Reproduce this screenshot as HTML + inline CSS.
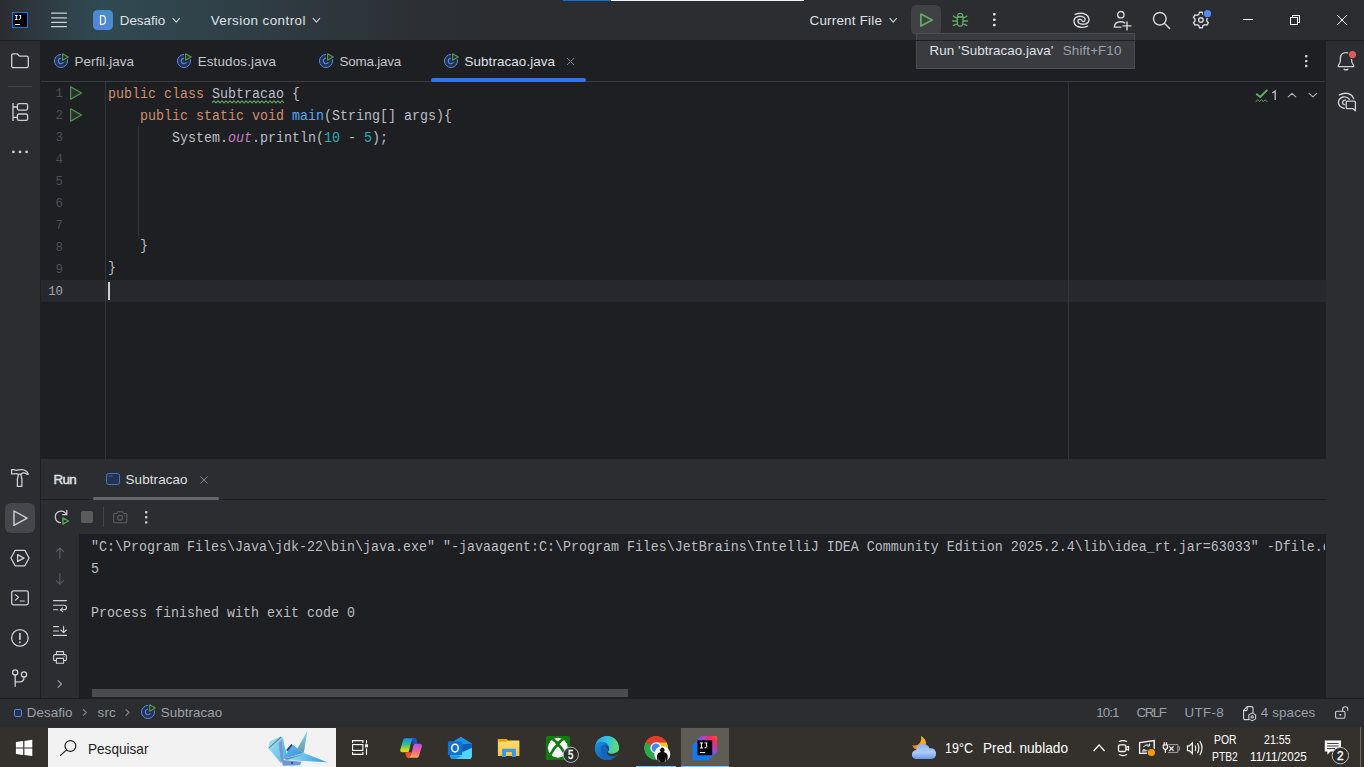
<!DOCTYPE html>
<html>
<head>
<meta charset="utf-8">
<title>Desafio - Subtracao.java</title>
<style>
*{box-sizing:border-box;margin:0;padding:0}
html,body{width:1364px;height:767px;overflow:hidden;background:#1e1f22}
body{position:relative;font-family:"Liberation Sans",sans-serif;font-size:13px;color:#dfe1e5}
.a{position:absolute}
.t{position:absolute;white-space:pre;line-height:16px}
svg{position:absolute;overflow:visible}
.mono{font-family:"Liberation Mono",monospace;font-size:13.333px;letter-spacing:0}
#title{left:0;top:0;width:1364px;height:40px;background:linear-gradient(90deg,#2b2d30 0px,#2d363c 30px,#2f434b 70px,#2f4a53 100px,#30474f 140px,#30424a 200px,#2e393f 300px,#2c3136 400px,#2b2d30 500px)}
#left{left:0;top:40px;width:40px;height:658px;background:#2b2d30}
#leftb{left:40px;top:40px;width:1px;height:658px;background:#1e1f22}
#right{left:1326px;top:40px;width:38px;height:658px;background:#2b2d30}
#tabs{left:41px;top:40px;width:1285px;height:41px;background:#1e1f22}
#tabline{left:41px;top:81px;width:1284px;height:1px;background:#393b40}
#editor{left:41px;top:82px;width:1285px;height:377px;background:#1e1f22}
#run{left:41px;top:459px;width:1285px;height:239px;background:#2b2d30}
#console{left:79px;top:534px;width:1247px;height:164px;background:#1e1f22}
#status{left:0;top:698px;width:1364px;height:29px;background:#2b2d30}
#taskbar{left:0;top:727px;width:1364px;height:40px;background:#34312c}
.kw{color:#cf8e6d}.fn{color:#56a8f5}.num{color:#2aacb8}.fld{color:#c77dbb;font-style:italic}
.code{color:#bcbec4}
.lnum{font-family:"Liberation Mono",monospace;font-size:12.4px;left:35px;width:28px;text-align:right;transform:translateY(-1.3px)}
.cl{transform:scaleY(1.09);transform-origin:0 11.55px}
</style>
</head>
<body>
<div id="title" class="a"></div>
<div id="left" class="a"></div>
<div id="leftb" class="a"></div>
<div id="right" class="a"></div>
<div id="tabs" class="a"></div>
<div id="tabline" class="a"></div>
<div id="editor" class="a"></div>
<div id="run" class="a"></div>
<div id="console" class="a"></div>
<div id="status" class="a"></div>
<div id="taskbar" class="a"></div>
<div class="a" style="left:563px;top:0;width:48px;height:1px;background:#0a6fd6"></div>
<div class="a" style="left:611px;top:0;width:193px;height:1px;background:#f2f2f2"></div>
<svg style="left:12px;top:12px" width="16" height="16" viewBox="0 0 16 16">
<rect x="0.5" y="0.5" width="15" height="15" fill="#000" stroke="#087cfa" stroke-width="1"/>
<path d="M3 3.5 h2.6 M4.3 3.5 v4 M3 7.5 h2.6 M7.3 3.5 h1.9 M8.6 3.5 v2.8 q0 1.3 -1.9 1.1" stroke="#fff" stroke-width="1" fill="none"/>
<rect x="3" y="12" width="5" height="1" fill="#fff"/>
</svg>
<svg style="left:51px;top:12px" width="16" height="16" viewBox="0 0 16 16"><rect x="0" y="0.6" width="16" height="1.2" rx="0.6" fill="#ced0d6"/><rect x="0" y="5.2" width="16" height="1.2" rx="0.6" fill="#ced0d6"/><rect x="0" y="9.7" width="16" height="1.2" rx="0.6" fill="#ced0d6"/><rect x="0" y="14.1" width="16" height="1.2" rx="0.6" fill="#ced0d6"/></svg>
<svg style="left:93px;top:10px" width="20" height="20" viewBox="0 0 20 20">
<defs><linearGradient id="dg" x1="0" y1="1" x2="1" y2="0"><stop offset="0" stop-color="#5b80e6"/><stop offset="1" stop-color="#3f93c4"/></linearGradient></defs>
<rect width="20" height="20" rx="4.5" fill="url(#dg)"/>
<path d="M7.5 5.7 h1.9 q3.1 0 3.1 4.3 q0 4.3 -3.1 4.3 h-1.9 z" fill="none" stroke="#fff" stroke-width="1.25" stroke-linejoin="round"/>
</svg>
<div class="t" style="left:119.70px;top:13.36px;font-size:13.4px;letter-spacing:0.027px;color:#dfe1e5;">Desafio</div>
<svg style="left:0;top:0" width="10" height="10"><path d="M172.89999999999998 18.3 L176.2 22.099999999999998 L179.5 18.3" fill="none" stroke="#ced0d6" stroke-width="1.1" stroke-linecap="round" stroke-linejoin="round"/></svg>
<div class="t" style="left:210.70px;top:13.36px;font-size:13.4px;letter-spacing:0.440px;color:#dfe1e5;">Version control</div>
<svg style="left:0;top:0" width="10" height="10"><path d="M313.09999999999997 18.3 L316.4 22.099999999999998 L319.7 18.3" fill="none" stroke="#ced0d6" stroke-width="1.1" stroke-linecap="round" stroke-linejoin="round"/></svg>
<div class="t" style="left:809.50px;top:13.36px;font-size:13.4px;letter-spacing:0.227px;color:#dfe1e5;">Current File</div>
<svg style="left:0;top:0" width="10" height="10"><path d="M889.9000000000001 18.3 L893.2 22.099999999999998 L896.5 18.3" fill="none" stroke="#ced0d6" stroke-width="1.1" stroke-linecap="round" stroke-linejoin="round"/></svg>
<div class="a" style="left:911px;top:5px;width:30px;height:30px;border-radius:5.5px;background:#3f4145"></div>
<svg style="left:0;top:0" width="10" height="10"><path d="M920.9 14 L932.2 20.05 L920.9 26.1 Z" fill="none" stroke="#5fad65" stroke-width="1.7" stroke-linejoin="round"/></svg>
<svg style="left:0;top:0" width="10" height="10" fill="none" stroke="#5fad65" stroke-width="1.45" stroke-linecap="round" stroke-linejoin="round">
<path d="M957.5 16.9 Q957.4 13.3 960.15 13.3 Q962.9 13.3 962.8 16.9 Z" stroke-width="1.25"/>
<path d="M957.3 16.9 H963 V22.4 Q963 26.2 960.15 26.2 Q957.3 26.2 957.3 22.4 Z" stroke-width="1.25"/>
<path d="M957 17.7 Q954.6 17.5 953.5 16.1 M957 21 H952.8 M957.1 24.1 Q954.8 24.3 953.5 25.6 M963.3 17.7 Q965.7 17.5 966.8 16.1 M963.3 21 H967.5 M963.2 24.1 Q965.5 24.3 966.8 25.6"/>
</svg>
<svg style="left:992.6px;top:13.3px" width="3" height="14" viewBox="0 0 3 14"><rect x="0" y="0" width="2.6" height="2.6" rx="0.8" fill="#dfe1e5"/><rect x="0" y="5.4" width="2.6" height="2.6" rx="0.8" fill="#dfe1e5"/><rect x="0" y="10.7" width="2.6" height="2.6" rx="0.8" fill="#dfe1e5"/></svg>
<svg style="left:0;top:0" width="10" height="10" fill="none" stroke="#d4d6db" stroke-width="1.5" stroke-linecap="round" transform="translate(1081.3 20) scale(0.94) translate(-1081.3 -20)">
<path d="M1074.3 13.7 Q1081 11.3 1086 13.9 Q1089.4 16.2 1089.1 20.2 Q1088.4 23.5 1084.4 24.1 Q1080 24.5 1078 22.6 Q1076.5 20.4 1078.5 19 Q1080.5 18.3 1081.7 20.2"/>
<path d="M1087.6 26.1 Q1082 28.6 1077 26.6 Q1073 24.4 1073.2 20.4 Q1073.6 16.8 1077.6 15.9 Q1082 15.2 1084.4 17.2 Q1086 19 1084.6 20.8 Q1083.4 21.8 1082.2 21"/>
</svg>
<svg style="left:1113px;top:10px" width="20" height="20" viewBox="0 0 20 20" fill="none" stroke="#d4d6db" stroke-width="1.4" stroke-linecap="round">
<circle cx="7.8" cy="4.7" r="3.2"/>
<path d="M8 17.1 H1.4 C1.4 13.6 4 11.8 7.6 11.8 C9.3 11.8 10.6 12.2 11.7 12.9"/>
<path d="M14 11.9 v8 M10 15.9 h8"/>
</svg>
<svg style="left:1152px;top:11px" width="20" height="20" viewBox="0 0 20 20" fill="none" stroke="#d4d6db" stroke-width="1.45" stroke-linecap="round">
<circle cx="7.8" cy="7.7" r="6.3"/><path d="M12.4 12.3 L17.6 17.5"/>
</svg>
<svg style="left:0;top:0" width="10" height="10" fill="none" stroke="#d4d6db" stroke-width="1.4" stroke-linejoin="round">
<path d="M1199.50 12.22 L1202.30 12.22 L1202.93 14.35 L1204.77 15.42 L1206.93 14.90 L1208.33 17.32 L1206.81 18.94 L1206.81 21.06 L1208.33 22.68 L1206.93 25.10 L1204.77 24.58 L1202.93 25.65 L1202.30 27.78 L1199.50 27.78 L1198.87 25.65 L1197.03 24.58 L1194.87 25.10 L1193.47 22.68 L1194.99 21.06 L1194.99 18.94 L1193.47 17.32 L1194.87 14.90 L1197.03 15.42 L1198.87 14.35 Z"/><circle cx="1200.9" cy="20" r="2.3"/>
<circle cx="1207.5" cy="13.7" r="4.6" fill="#2b2d30" stroke="none"/><circle cx="1207.5" cy="13.7" r="3.6" fill="#548af7" stroke="none"/>
</svg>
<svg style="left:0;top:0" width="10" height="10" fill="none" stroke="#fff" stroke-width="1" shape-rendering="crispEdges">
<path d="M1243 19.5 H1253"/>
<rect x="1290.5" y="17.5" width="7" height="7"/><path d="M1292.5 17.5 V15.5 H1299.5 V22.5 H1297.5"/>
</svg>
<svg style="left:0;top:0" width="10" height="10" fill="none" stroke="#fff" stroke-width="1"><path d="M1337 15 L1347 25 M1347 15 L1337 25"/></svg>
<div class="a" style="left:916px;top:33px;width:219px;height:36px;background:#393b40;border:1px solid #4a4c52"></div>
<div class="t" style="left:929.60px;top:43.26px;font-size:13.4px;letter-spacing:0.052px;color:#dfe1e5;">Run 'Subtracao.java'</div>
<div class="t" style="left:1062.80px;top:43.26px;font-size:13.4px;letter-spacing:0.109px;color:#9da0a8;">Shift+F10</div>
<svg style="left:53px;top:53px" width="16" height="16" viewBox="0 0 16 16"><circle cx="8" cy="8" r="6.5" fill="#25324d" stroke="#548af7" stroke-width="1"/><path d="M10.1 6.3 A2.7 2.7 0 1 0 10.1 9.7" fill="none" stroke="#548af7" stroke-width="1.1" stroke-linecap="round"/><path d="M9.6 0.7 L15.3 4 L9.6 7.3 Z" fill="#1e1f22" stroke="#1e1f22" stroke-width="3" stroke-linejoin="round"/><path d="M9.6 0.7 L15.3 4 L9.6 7.3 Z" fill="#253627" stroke="#57965c" stroke-width="1.1" stroke-linejoin="round"/></svg>
<div class="t" style="left:74.50px;top:54.36px;font-size:13.4px;letter-spacing:0.066px;color:#c4c6cc;">Perfil.java</div>
<svg style="left:176px;top:53px" width="16" height="16" viewBox="0 0 16 16"><circle cx="8" cy="8" r="6.5" fill="#25324d" stroke="#548af7" stroke-width="1"/><path d="M10.1 6.3 A2.7 2.7 0 1 0 10.1 9.7" fill="none" stroke="#548af7" stroke-width="1.1" stroke-linecap="round"/><path d="M9.6 0.7 L15.3 4 L9.6 7.3 Z" fill="#1e1f22" stroke="#1e1f22" stroke-width="3" stroke-linejoin="round"/><path d="M9.6 0.7 L15.3 4 L9.6 7.3 Z" fill="#253627" stroke="#57965c" stroke-width="1.1" stroke-linejoin="round"/></svg>
<div class="t" style="left:197.70px;top:54.36px;font-size:13.4px;letter-spacing:0.152px;color:#c4c6cc;">Estudos.java</div>
<svg style="left:318px;top:53px" width="16" height="16" viewBox="0 0 16 16"><circle cx="8" cy="8" r="6.5" fill="#25324d" stroke="#548af7" stroke-width="1"/><path d="M10.1 6.3 A2.7 2.7 0 1 0 10.1 9.7" fill="none" stroke="#548af7" stroke-width="1.1" stroke-linecap="round"/><path d="M9.6 0.7 L15.3 4 L9.6 7.3 Z" fill="#1e1f22" stroke="#1e1f22" stroke-width="3" stroke-linejoin="round"/><path d="M9.6 0.7 L15.3 4 L9.6 7.3 Z" fill="#253627" stroke="#57965c" stroke-width="1.1" stroke-linejoin="round"/></svg>
<div class="t" style="left:339.60px;top:54.36px;font-size:13.4px;letter-spacing:-0.214px;color:#c4c6cc;">Soma.java</div>
<svg style="left:443.4px;top:53px" width="16" height="16" viewBox="0 0 16 16"><circle cx="8" cy="8" r="6.5" fill="#25324d" stroke="#548af7" stroke-width="1"/><path d="M10.1 6.3 A2.7 2.7 0 1 0 10.1 9.7" fill="none" stroke="#548af7" stroke-width="1.1" stroke-linecap="round"/><path d="M9.6 0.7 L15.3 4 L9.6 7.3 Z" fill="#1e1f22" stroke="#1e1f22" stroke-width="3" stroke-linejoin="round"/><path d="M9.6 0.7 L15.3 4 L9.6 7.3 Z" fill="#253627" stroke="#57965c" stroke-width="1.1" stroke-linejoin="round"/></svg>
<div class="t" style="left:464.50px;top:54.36px;font-size:13.4px;letter-spacing:0.093px;color:#dfe1e5;">Subtracao.java</div>
<div class="a" style="left:431px;top:78px;width:155px;height:3.5px;border-radius:2px;background:#3574f0"></div>
<svg style="left:566px;top:57px" width="9" height="9" viewBox="0 0 9 9"><path d="M1 1 L8 8 M8 1 L1 8" stroke="#868a91" stroke-width="1" fill="none"/></svg>
<svg style="left:1304.8px;top:54.8px" width="3" height="14" viewBox="0 0 3 14"><rect x="0" y="0" width="2.4" height="2.4" rx="0.6" fill="#ced0d6"/><rect x="0" y="4.9" width="2.4" height="2.4" rx="0.6" fill="#ced0d6"/><rect x="0" y="9.8" width="2.4" height="2.4" rx="0.6" fill="#ced0d6"/></svg>
<div class="a" style="left:41px;top:280px;width:1285px;height:22px;background:#26282e"></div>
<div class="a" style="left:105px;top:82px;width:1px;height:377px;background:#313438"></div>
<div class="a" style="left:1068px;top:82px;width:1px;height:377px;background:#313438"></div>
<div class="a" style="left:138px;top:126px;width:1px;height:110px;background:#313438"></div>
<div class="a" style="left:108px;top:282px;width:2px;height:18px;background:#ced0d6"></div>
<div class="t lnum" style="top:86.5px;color:#4b5059">1</div>
<div class="t lnum" style="top:108.5px;color:#4b5059">2</div>
<div class="t lnum" style="top:130.5px;color:#4b5059">3</div>
<div class="t lnum" style="top:152.5px;color:#4b5059">4</div>
<div class="t lnum" style="top:174.5px;color:#4b5059">5</div>
<div class="t lnum" style="top:196.5px;color:#4b5059">6</div>
<div class="t lnum" style="top:218.5px;color:#4b5059">7</div>
<div class="t lnum" style="top:240.5px;color:#4b5059">8</div>
<div class="t lnum" style="top:262.5px;color:#4b5059">9</div>
<div class="t lnum" style="top:284.5px;color:#a1a3ab">10</div>
<div class="t mono code cl" style="left:108px;top:86.5px"><span class="kw">public class</span> Subtracao {</div>
<div class="t mono code cl" style="left:108px;top:108.5px">    <span class="kw">public static void</span> <span class="fn">main</span>(String[] args){</div>
<div class="t mono code cl" style="left:108px;top:130.5px">        System.<span class="fld">out</span>.println(<span class="num">10</span> - <span class="num">5</span>);</div>
<div class="t mono code cl" style="left:108px;top:239.3px">    }</div>
<div class="t mono code cl" style="left:108px;top:261.3px">}</div>
<svg style="left:0;top:0" width="1364" height="200"><polyline points="212,102.9 214,100.9 216,102.9 218,100.9 220,102.9 222,100.9 224,102.9 226,100.9 228,102.9 230,100.9 232,102.9 234,100.9 236,102.9 238,100.9 240,102.9 242,100.9 244,102.9 246,100.9 248,102.9 250,100.9 252,102.9 254,100.9 256,102.9 258,100.9 260,102.9 262,100.9 264,102.9 266,100.9 268,102.9 270,100.9 272,102.9 274,100.9 276,102.9 278,100.9 280,102.9 282,100.9 284,102.9" fill="none" stroke="#5fa364" stroke-width="1.1"/></svg>
<svg style="left:68px;top:85px" width="16" height="16" viewBox="0 0 16 16"><path d="M2.6 1.7 L13.6 8 L2.6 14.3 Z" fill="#253627" stroke="#57965c" stroke-width="1.1" stroke-linejoin="round"/></svg>
<svg style="left:68px;top:107px" width="16" height="16" viewBox="0 0 16 16"><path d="M2.6 1.7 L13.6 8 L2.6 14.3 Z" fill="#253627" stroke="#57965c" stroke-width="1.1" stroke-linejoin="round"/></svg>
<div class="a" style="left:41px;top:499px;width:1285px;height:1px;background:#1e1f22"></div>
<div class="t" style="left:53.40px;top:472.16px;font-size:13.4px;letter-spacing:-0.591px;color:#dfe1e5;-webkit-text-stroke:0.45px #dfe1e5;">Run</div>
<svg style="left:106px;top:473px" width="14" height="12" viewBox="0 0 14 12">
<rect x="0.5" y="0.5" width="13" height="11" rx="2" fill="#25324d" stroke="#4a7be0" stroke-width="0.9"/>
<path d="M2.6 3.2 h1.6 M5 3.2 h1.6" stroke="#4a7be0" stroke-width="0.9"/>
</svg>
<div class="t" style="left:125.50px;top:472.16px;font-size:13.4px;letter-spacing:0.127px;color:#dfe1e5;">Subtracao</div>
<svg style="left:200px;top:476px" width="8" height="8" viewBox="0 0 8 8"><path d="M0.4 0.4 L7.6 7.6 M7.6 0.4 L0.4 7.6" stroke="#868a91" stroke-width="1" fill="none"/></svg>
<div class="a" style="left:93px;top:497px;width:126px;height:3px;border-radius:1.5px;background:#63666c"></div>
<svg style="left:0;top:0" width="10" height="10" fill="none">
<path d="M66.3 514.6 A5.7 5.7 0 1 0 60.9 522.6" stroke="#ced0d6" stroke-width="1.25" stroke-linecap="round"/>
<path d="M62.7 514.7 H66.8 V510.3" stroke="#ced0d6" stroke-width="1.25" stroke-linecap="round" stroke-linejoin="miter"/>
<path d="M62.9 518 L68.5 521 L62.9 524 Z" fill="#2b2d30" stroke="#2b2d30" stroke-width="3.2" stroke-linejoin="round"/>
<path d="M62.9 517.9 L68.5 521 L62.9 524.1 Z" fill="#253627" stroke="#5aa15f" stroke-width="1.4" stroke-linejoin="round"/>
</svg>
<div class="a" style="left:81px;top:511px;width:12px;height:12px;border-radius:2px;background:#5b5b5e"></div>
<div class="a" style="left:103px;top:507px;width:1px;height:20px;background:#43454a"></div>
<svg style="left:113px;top:511px" width="14.5" height="12.5" viewBox="0 0 15 13" fill="none" stroke="#5e5f61" stroke-width="1.1" stroke-linejoin="round">
<path d="M0.6 4 Q0.6 2.6 2 2.6 H3.8 L5 0.7 H10 L11.2 2.6 H13 Q14.4 2.6 14.4 4 V10.8 Q14.4 12.2 13 12.2 H2 Q0.6 12.2 0.6 10.8 Z"/>
<circle cx="7.3" cy="7" r="2.5"/><circle cx="11.9" cy="4.8" r="0.55" fill="#5e5f61" stroke="none"/>
</svg>
<svg style="left:144.8px;top:510.8px" width="3" height="14" viewBox="0 0 3 14"><rect x="0" y="0" width="2.4" height="2.4" rx="0.7" fill="#ced0d6"/><rect x="0" y="5.1" width="2.4" height="2.4" rx="0.7" fill="#ced0d6"/><rect x="0" y="10.2" width="2.4" height="2.4" rx="0.7" fill="#ced0d6"/></svg>
<svg style="left:0;top:0" width="10" height="10"><path d="M59.9 558.2 V548.0 M56.3 551.6 L59.9 548.0 L63.5 551.6" fill="none" stroke="#5a5d63" stroke-width="1.1" stroke-linecap="round" stroke-linejoin="round"/></svg>
<svg style="left:0;top:0" width="10" height="10"><path d="M59.9 573.6 V584.1999999999999 M56.3 580.5999999999999 L59.9 584.1999999999999 L63.5 580.5999999999999" fill="none" stroke="#5a5d63" stroke-width="1.1" stroke-linecap="round" stroke-linejoin="round"/></svg>
<svg style="left:53px;top:600px" width="14" height="12" viewBox="0 0 14 12" fill="none" stroke="#ced0d6" stroke-width="1.1" stroke-linecap="round" stroke-linejoin="round">
<path d="M0.5 0.6 H13.5"/><path d="M0.5 5.2 H11 Q13.5 5.2 13.5 7.5 Q13.5 9.8 11 9.8 H7.6"/><path d="M9.6 7.8 L7.5 9.8 L9.6 11.7"/><path d="M0.5 9.8 H4.8"/>
</svg>
<svg style="left:53px;top:626px" width="14" height="10" viewBox="0 0 14 10" fill="none" stroke="#ced0d6" stroke-width="1.1" stroke-linecap="round" stroke-linejoin="round">
<path d="M0.5 0.6 H5.6 M0.5 5 H5.6 M0.5 9.4 H13.5"/><path d="M10.6 0.4 V6.6 M7.9 4 L10.6 6.7 L13.3 4"/>
</svg>
<svg style="left:53px;top:651px" width="14" height="13" viewBox="0 0 14 13" fill="none" stroke="#ced0d6" stroke-width="1.1" stroke-linejoin="round">
<path d="M3.4 3.6 V0.6 H10.6 V3.6"/><path d="M3.4 9.6 H2 Q0.6 9.6 0.6 8.2 V5 Q0.6 3.6 2 3.6 H12 Q13.4 3.6 13.4 5 V8.2 Q13.4 9.6 12 9.6 H10.6"/><rect x="3.4" y="7.4" width="7.2" height="4.8"/><circle cx="11.2" cy="5.6" r="0.5" fill="#ced0d6" stroke="none"/>
</svg>
<svg style="left:0;top:0" width="10" height="10"><path d="M58 680.6 L61.5 684 L58 687.4" fill="none" stroke="#9da0a8" stroke-width="1.1" stroke-linecap="round" stroke-linejoin="round"/></svg>
<div class="a" style="left:79px;top:534px;width:1246px;height:160px;overflow:hidden">
<div class="t mono cl" style="left:12px;top:5.5px;color:#bcbec4">"C:\Program Files\Java\jdk-22\bin\java.exe" "-javaagent:C:\Program Files\JetBrains\IntelliJ IDEA Community Edition 2025.2.4\lib\idea_rt.jar=63033" -Dfile.encoding=UTF-8 -Dsun.stdout.encoding=UTF-8</div>
<div class="t mono cl" style="left:12px;top:27.5px;color:#bcbec4">5</div>
<div class="t mono cl" style="left:12px;top:71.5px;color:#bcbec4">Process finished with exit code 0</div>
</div>
<div class="a" style="left:92px;top:689px;width:536px;height:8px;background:#4a4b4f"></div>
<svg style="left:13.9px;top:709px" width="8" height="8" viewBox="0 0 8 8"><rect x="0.5" y="0.5" width="7" height="7" rx="1.3" fill="#25324d" stroke="#548af7" stroke-width="1"/></svg>
<div class="t" style="left:26.80px;top:705.06px;font-size:13.4px;letter-spacing:0.027px;color:#9da0a8;">Desafio</div>
<svg style="left:0;top:0" width="10" height="10"><path d="M83.3 709.6 L86.3 712.5 L83.3 715.4" fill="none" stroke="#868a91" stroke-width="1.1" stroke-linecap="round" stroke-linejoin="round"/></svg>
<div class="t" style="left:97.50px;top:705.06px;font-size:13.4px;letter-spacing:0.219px;color:#9da0a8;">src</div>
<svg style="left:0;top:0" width="10" height="10"><path d="M126.0 709.6 L129.0 712.5 L126.0 715.4" fill="none" stroke="#868a91" stroke-width="1.1" stroke-linecap="round" stroke-linejoin="round"/></svg>
<svg style="left:140.2px;top:704.1px" width="16" height="16" viewBox="0 0 16 16"><circle cx="8" cy="8" r="6.5" fill="#25324d" stroke="#548af7" stroke-width="1"/><path d="M10.1 6.3 A2.7 2.7 0 1 0 10.1 9.7" fill="none" stroke="#548af7" stroke-width="1.1" stroke-linecap="round"/><path d="M9.6 0.7 L15.3 4 L9.6 7.3 Z" fill="#2b2d30" stroke="#2b2d30" stroke-width="3" stroke-linejoin="round"/><path d="M9.6 0.7 L15.3 4 L9.6 7.3 Z" fill="#253627" stroke="#57965c" stroke-width="1.1" stroke-linejoin="round"/></svg>
<div class="t" style="left:160.70px;top:705.06px;font-size:13.4px;letter-spacing:0.064px;color:#9da0a8;">Subtracao</div>
<div class="t" style="left:1096.20px;top:705.16px;font-size:13.4px;letter-spacing:-0.894px;color:#9da0a8;">10:1</div>
<div class="t" style="left:1136.60px;top:705.16px;font-size:13.4px;letter-spacing:-1.531px;color:#9da0a8;">CRLF</div>
<div class="t" style="left:1184.50px;top:705.16px;font-size:13.4px;letter-spacing:0.309px;color:#9da0a8;">UTF-8</div>
<div class="t" style="left:1260.70px;top:705.16px;font-size:13.4px;letter-spacing:0.138px;color:#9da0a8;">4 spaces</div>
<svg style="left:1243px;top:706px" width="14" height="16" viewBox="0 0 14 16" fill="none" stroke="#ced0d6" stroke-width="1.1" stroke-linejoin="round" stroke-linecap="round">
<path d="M5.6 13.6 H2 Q0.6 13.6 0.6 12.2 V4.4 L4.2 0.6 H8.6 Q10 0.6 10 2 V6.8"/><path d="M0.8 4.6 H3 Q4.2 4.6 4.2 3.4 V0.8"/>
<path d="M9.2 6.9 L12.6 8.9 V12.9 L9.2 14.9 L5.8 12.9 V8.9 Z" fill="#2b2d30"/><circle cx="9.2" cy="10.9" r="1.1"/>
</svg>
<svg style="left:1335px;top:705.9px" width="14" height="13" viewBox="0 0 14 13" fill="none" stroke="#ced0d6" stroke-width="1.1" stroke-linejoin="round" stroke-linecap="round">
<rect x="0.6" y="5.2" width="9.4" height="7" rx="1.4"/><rect x="4.4" y="8" width="1.8" height="1.6" fill="#ced0d6" stroke="none"/>
<path d="M7.6 5 V3.2 Q7.6 0.7 10.2 0.7 Q12.8 0.7 12.8 3.2 V4.2"/>
</svg>
<div class="a" style="left:48px;top:728px;width:288px;height:39px;background:#f2f2f2"></div>
<svg style="left:0;top:0" width="10" height="10" fill="#fff">
<path d="M15.9 742.1 L23.2 741.1 V747.4 H15.9 Z"/><path d="M24.4 740.9 L32.3 739.8 V747.4 H24.4 Z"/>
<path d="M15.9 748.5 H23.2 V754.9 L15.9 753.9 Z"/><path d="M24.4 748.5 H32.3 V756.1 L24.4 755 Z"/>
</svg>
<svg style="left:0;top:0" width="10" height="10" fill="none" stroke="#1f1f1f" stroke-width="1.2" stroke-linecap="round"><circle cx="70.4" cy="746" r="5.4"/><path d="M66.6 749.9 L60.5 755.4"/></svg>
<div class="t" style="left:88.40px;top:741.00px;font-size:15px;color:#1c1c1c;transform:scaleX(0.9055);transform-origin:0 0;">Pesquisar</div>
<svg style="left:352px;top:740px" width="17" height="15" viewBox="0 0 17 15" fill="none" stroke="#fff" stroke-width="1.1" shape-rendering="geometricPrecision">
<path d="M0.6 3 V0.6 H10.9 V3"/><rect x="0.6" y="4.6" width="10.3" height="5.8"/><path d="M0.6 12 V14.4 H10.9 V12"/>
<path d="M14.5 0 V3.6 M14.5 8.4 V15"/><rect x="13.1" y="4.3" width="2.9" height="3" fill="#fff" stroke="none"/>
</svg>
<div class="a" style="left:681px;top:728px;width:48px;height:39px;background:#5f5c56"></div>
<div class="a" style="left:636px;top:766px;width:40px;height:1px;background:#7cc4f8"></div>
<div class="a" style="left:681px;top:766px;width:48px;height:1px;background:#7cc4f8"></div>
<div class="t" style="left:944.90px;top:740.45px;font-size:14px;color:#fff;transform:scaleX(0.8919);transform-origin:0 0;">19°C</div>
<div class="t" style="left:982.80px;top:740.45px;font-size:14px;color:#fff;transform:scaleX(0.9750);transform-origin:0 0;">Pred. nublado</div>
<svg style="left:0;top:0" width="10" height="10"><path d="M1093.6 751 L1099.1 745 L1104.6 751" fill="none" stroke="#fff" stroke-width="1.2"/></svg>
<svg style="left:0;top:0" width="10" height="10" fill="none" stroke="#fff" stroke-width="1.3" stroke-linejoin="round" stroke-linecap="round">
<rect x="1118.5" y="744.9" width="7.4" height="6.6" rx="1.5"/><path d="M1126.4 747.3 L1128.6 746.2 V750.2 L1126.4 749.1" stroke-width="1.1"/>
<path d="M1119.2 741.6 Q1123 739.6 1126.8 741.6 M1119.2 754.6 Q1123 756.6 1126.8 754.6" stroke-width="1.1"/>
</svg>
<svg style="left:0;top:0" width="10" height="10" fill="none" stroke="#fff" stroke-width="1.3" stroke-linejoin="miter">
<path d="M1139.6 742.6 L1154.2 740.5 V753 L1139.6 753.4 Z"/>
<path d="M1143.4 747.2 Q1144.4 744.6 1148.6 744.8 M1149.6 743.6 V746 H1147.2 M1149.2 749 Q1148 751.4 1143.8 751 M1143 752.2 V749.8 H1145.4" stroke-width="1"/>
<circle cx="1151.4" cy="752.5" r="4.5" fill="#34312c" stroke="none"/><circle cx="1151.4" cy="752.5" r="3.6" fill="#f89a0c" stroke="none"/>
</svg>
<svg style="left:0;top:0" width="10" height="10" fill="none" stroke-linejoin="round" stroke-linecap="butt">
<path d="M1168.4 744.6 H1177.8 V752.4 H1168" stroke="#a3a29f" stroke-width="1"/><path d="M1178.3 746.8 H1179.4 V750.2 H1178.3" stroke="#a3a29f" stroke-width="1"/>
<path d="M1169.2 746.4 L1173.6 750.8 M1173.6 746.4 L1169.2 750.8" stroke="#fff" stroke-width="1.1"/>
<path d="M1163.2 745 H1167.6 V746.8 Q1167.6 749.4 1165.4 749.4 Q1163.2 749.4 1163.2 746.8 Z" stroke="#fff" stroke-width="1.1"/>
<path d="M1164.3 742.3 V745 M1166.5 742.3 V745 M1165.4 749.4 V753" stroke="#fff" stroke-width="1.2"/>
</svg>
<svg style="left:0;top:0" width="10" height="10" fill="none" stroke="#fff" stroke-width="1.2" stroke-linejoin="miter" stroke-linecap="round">
<path d="M1187.5 745.8 H1189.4 L1192.3 742.9 V753.5 L1189.4 750.6 H1187.5 Z"/>
<path d="M1195.2 745.8 Q1196.6 748.2 1195.2 750.6 M1197.6 743.6 Q1200.2 748.2 1197.6 752.8 M1200 741.4 Q1204 748.2 1200 754.8" stroke-width="1.1"/>
</svg>
<div class="t" style="left:1213.50px;top:731.84px;font-size:12px;color:#fff;transform:scaleX(0.8652);transform-origin:0 0;">POR</div>
<div class="t" style="left:1212.20px;top:748.74px;font-size:12px;color:#fff;transform:scaleX(0.8596);transform-origin:0 0;">PTB2</div>
<div class="t" style="left:1264.00px;top:731.84px;font-size:12px;color:#fff;transform:scaleX(0.8858);transform-origin:0 0;">21:55</div>
<div class="t" style="left:1250.30px;top:748.74px;font-size:12px;color:#fff;transform:scaleX(0.9729);transform-origin:0 0;">11/11/2025</div>
<svg style="left:0;top:0" width="10" height="10">
<path d="M1324.8 740.4 H1341 V751.6 H1330.4 L1327.4 754.8 V751.6 H1324.8 Z" fill="#fff"/>
<path d="M1327.2 743.4 H1338.6 M1327.2 746 H1338.6 M1327.2 748.6 H1335" stroke="#34312c" stroke-width="1"/>
<circle cx="1340.3" cy="755.6" r="8.2" fill="#2a2927" stroke="#bdbdbd" stroke-width="1"/>
</svg>
<div class="t" style="left:1337.00px;top:748.07px;font-size:12.5px;color:#fff;transform:scaleX(0.9493);transform-origin:0 0;-webkit-text-stroke:0.4px #fff;">2</div>
<div class="a" style="left:1360px;top:727px;width:1px;height:40px;background:#6b6a66"></div>
<svg style="left:0;top:0" width="10" height="10">
<defs>
<linearGradient id="c1" x1="0" y1="0" x2="1" y2="1"><stop offset="0" stop-color="#a8e6ea"/><stop offset="1" stop-color="#55b7ee"/></linearGradient>
<linearGradient id="c2" x1="0" y1="0" x2="0" y2="1"><stop offset="0" stop-color="#7fe0e8"/><stop offset="1" stop-color="#6796a6"/></linearGradient>
<linearGradient id="c3" x1="0" y1="0" x2="1" y2="0"><stop offset="0" stop-color="#9be8e6"/><stop offset="1" stop-color="#2f97f3"/></linearGradient>
<linearGradient id="c4" x1="0" y1="0" x2="1" y2="1"><stop offset="0" stop-color="#55c4f0"/><stop offset="1" stop-color="#4a88d8"/></linearGradient>
</defs>
<polygon points="268.3,748.2 269.5,741.4 280.8,736.5 283.4,738.6 285.4,754.8 283.9,758.9 280.8,763.0" fill="url(#c1)"/>
<polygon points="268.5,748.0 280.6,736.7 281.4,737.5 269.1,748.6" fill="#5a5fa8" opacity="0.85"/>
<polygon points="278.7,743.5 281.6,739.4 283.5,758.9 282.6,765.6 280.8,758.9" fill="#7d86c4" opacity="0.75"/>
<polygon points="282.0,738.4 284.9,747.6 286.9,754.8 283.9,758.9" fill="#4fc0ee"/>
<polygon points="307.5,730.4 303.8,752.7 297.4,748.6" fill="url(#c2)"/>
<polygon points="291.6,744.0 303.8,752.9 283.9,758.7" fill="url(#c4)"/>
<polygon points="291.6,743.7 292.3,745.6 287.6,751.5 286.1,749.9" fill="#2f3f9c"/>
<polygon points="283.9,758.7 303.8,753.0 327.2,762.2 285.4,760.1" fill="url(#c3)"/>
<polygon points="283.9,758.7 303.4,754.4 286.9,759.7" fill="#5a5fae" opacity="0.75"/>
<polygon points="282.6,759.9 301.3,761.8 300.1,765.3 283.0,765.7" fill="#6e97d6"/>
<polygon points="291.1,762.0 293.1,762.2 292.7,764.2 291.5,764.0" fill="#34347e"/>
</svg>
<svg style="left:0;top:0" width="10" height="10">
<defs>
<linearGradient id="k1" x1="0" y1="0" x2="0" y2="1"><stop offset="0" stop-color="#1a8df2"/><stop offset="0.45" stop-color="#2fc386"/><stop offset="0.8" stop-color="#c9d626"/><stop offset="1" stop-color="#f7cf0c"/></linearGradient>
<linearGradient id="k2" x1="0" y1="0" x2="0" y2="1"><stop offset="0" stop-color="#b054ee"/><stop offset="0.5" stop-color="#f0609c"/><stop offset="1" stop-color="#ffa340"/></linearGradient>
</defs>
<path d="M412.5,738.4 L415.2,738.2 Q416.5,738.5 417.1,743.4 L413.1,743.7 Z" fill="#1b50d4" stroke="#1b50d4" stroke-width="0.8" stroke-linejoin="round"/>
<path d="M405.1,738.2 L413.1,738.2 Q411.5,740.6 410.6,744.3 L408.8,751.4 Q408.5,752.3 406.9,752.3 L402.0,752.2 Q399.7,751.8 400.3,749.5 L403.2,739.7 Q403.7,738.2 405.1,738.2 Z" fill="url(#k1)"/>
<path d="M405.7,752.9 L410.9,752.6 L409.1,757.9 Q407.2,757.9 406.6,756.6 Z" fill="#f0522a" stroke="#f0522a" stroke-width="0.8" stroke-linejoin="round"/>
<path d="M415.2,743.7 L420.2,743.7 Q422.4,744.1 421.8,746.5 L418.9,756.3 Q418.5,757.7 417.1,757.7 L409.1,757.7 Q410.9,755.4 411.9,751.7 L413.6,744.9 Q413.8,743.7 415.2,743.7 Z" fill="url(#k2)"/>
</svg>
<svg style="left:0;top:0" width="10" height="10">
<polygon points="460.8,736.9 471.9,743.7 471.9,756.6 470.4,758.9 451.6,758.9 449.9,756.6 449.9,743.7" fill="#28a8ea"/>
<polygon points="460.8,736.9 471.9,743.7 462.3,749.9 449.9,743.7" fill="#1a94e0"/>
<polygon points="462.3,744.3 471.9,743.7 471.9,748.0 462.3,752.3" fill="#0a5cbd"/>
<polygon points="462.3,752.3 471.9,747.7 471.9,756.6 470.4,758.9 455.6,758.9" fill="#4fd6ff"/>
<polygon points="449.9,756.0 462.3,756.0 455.6,758.9 451.6,758.9 449.9,756.6" fill="#1e9be6"/>
<rect x="447.9" y="741.2" width="14.2" height="13.9" rx="0.6" fill="#1170d2"/>
<ellipse cx="455.0" cy="748.1" rx="3.3" ry="3.9" fill="none" stroke="#fff" stroke-width="1.5"/>
</svg>
<svg style="left:0;top:0" width="10" height="10">
<defs><linearGradient id="e1" x1="0" y1="0" x2="0" y2="1"><stop offset="0" stop-color="#ffdc6c"/><stop offset="1" stop-color="#f8c546"/></linearGradient></defs>
<path d="M497.9 739.6 Q497.9 738.9 498.6 738.9 H507 L507.8 740.2 V742.4 H497.9 Z" fill="#e7a300"/>
<rect x="497.9" y="740.4" width="21.5" height="15.6" rx="0.5" fill="url(#e1)"/>
<rect x="497.9" y="739" width="9" height="2.7" rx="0.6" fill="#eaa800"/>
<path d="M502 757.1 V749.6 Q502 748.8 502.8 748.8 H515.1 Q515.9 748.8 515.9 749.6 V757.1 H511.9 V752.1 H506 V757.1 Z" fill="#3b9ae6"/>
<rect x="545.9" y="736" width="24.1" height="24" rx="1.6" fill="#107c10"/>
<circle cx="557.9" cy="747.8" r="10.1" fill="#fff"/>
<clipPath id="xb"><circle cx="557.9" cy="747.8" r="10.1"/></clipPath>
<g clip-path="url(#xb)" fill="none" stroke="#107c10" stroke-linecap="butt">
<path d="M550.6 737.6 Q555.6 740.6 557.9 744.4 Q552.6 749 549.6 757" stroke-width="2.7"/>
<path d="M565.2 737.6 Q560.2 740.6 557.9 744.4 Q563.2 749 566.2 757" stroke-width="2.7"/>
<path d="M555.4 742.6 L557.9 740.9 L560.4 742.6 L557.9 746.4 Z" fill="#107c10" stroke="none"/>
</g>
<circle cx="557.9" cy="747.8" r="10.6" fill="none" stroke="#107c10" stroke-width="1"/>
<circle cx="570.8" cy="754.8" r="7.6" fill="#2f2e2b" fill-opacity="0.9" stroke="#c4c4c4" stroke-width="0.9"/>
</svg>
<div class="t" style="left:567.80px;top:746.67px;font-size:12.5px;color:#fff;transform:scaleX(0.7767);transform-origin:0 0;-webkit-text-stroke:0.4px #fff;">5</div>
<svg style="left:0;top:0" width="10" height="10">
<defs>
<linearGradient id="g1" x1="0" y1="0.3" x2="1" y2="0.5"><stop offset="0" stop-color="#2a9fe0"/><stop offset="0.45" stop-color="#2fc3e6"/><stop offset="1" stop-color="#62e060"/></linearGradient>
<linearGradient id="g2" x1="0" y1="0" x2="1" y2="1"><stop offset="0" stop-color="#1f8ee0"/><stop offset="1" stop-color="#0b4fa2"/></linearGradient>
<clipPath id="ec"><circle cx="607" cy="747.9" r="12.2"/></clipPath>
</defs>
<g clip-path="url(#ec)">
<circle cx="607" cy="747.9" r="12.2" fill="url(#g1)"/>
<path d="M594.6 748 Q595.6 741.6 602.2 741.8 Q608.6 742.2 609 747.6 Q609.2 751.4 606.4 752.4 Q607.4 755.8 612.4 756.2 Q616 756.2 618.4 754 Q615.6 760.4 607 760.4 Q595.6 759.8 594.6 748 Z" fill="url(#g2)"/>
<path d="M600.6 750.2 Q600.4 745.2 605 744.6 Q608.6 744.6 609.2 748.4 Q609 751.2 606.6 752.4 Q608 755.8 612.6 756 Q616.8 755.6 618.8 752.6 Q617.6 758.6 611 759.6 Q601.6 759.4 600.6 750.2 Z" fill="#1565bd"/>
<path d="M604.4 746.8 Q606.8 745.4 608.6 747.6 Q609.4 750 607.6 752 Q609.4 754.2 613 753.8 Q617.4 753 619.4 749.8 L619.4 752.6 Q616.6 756.4 612.4 756.2 Q607.6 755.8 606.6 752.4 Q608.8 750.6 607.6 748 Q606.4 746.4 604.4 746.8 Z" fill="#34312c"/>
</g>
</svg>
<svg style="left:0;top:0" width="10" height="10">
<defs><clipPath id="cc"><circle cx="656" cy="747.9" r="12"/></clipPath></defs>
<g clip-path="url(#cc)">
<circle cx="656" cy="747.9" r="12" fill="#2da94f"/>
<path d="M656 747.9 L645.6 741.9 A12 12 0 0 1 666.4 741.9 Z" fill="#e33b2e"/>
<path d="M645.4 742.2 A12 12 0 0 1 666.6 742.2 L656 742.2 Z" fill="#e33b2e"/>
<path d="M656 742.4 H667 A12 12 0 0 1 656.6 760 L661.4 751 Z" fill="#fbc116"/>
</g>
<circle cx="656" cy="747.9" r="5.6" fill="#fff"/><circle cx="656" cy="747.9" r="4.4" fill="#4285f4"/>
<circle cx="662.3" cy="754.1" r="8" fill="#fff"/>
<path d="M662.3 747.6 Q664.2 747.6 664.2 749.4 L665.4 749.8 L664.4 750.4 Q664.4 751.4 663.6 752 Q667 752.6 667.6 755.4 Q668 758 667.2 760.4 L665.8 761 L666 757 L665.2 761.4 Q662.3 762.6 659.4 761.4 L658.6 757 L658.8 761 L657.4 760.4 Q656.6 758 657 755.4 Q657.6 752.6 661 752 Q660.2 751.4 660.2 750.4 L659.2 749.8 L660.4 749.4 Q660.4 747.6 662.3 747.6 Z" fill="#0d0b0a"/>
</svg>
<svg style="left:0;top:0" width="10" height="10">
<defs><linearGradient id="ij" x1="0" y1="1" x2="1" y2="0"><stop offset="0" stop-color="#087cfa"/><stop offset="0.38" stop-color="#087cfa"/><stop offset="0.62" stop-color="#8b4fe0"/><stop offset="0.85" stop-color="#fe2857"/><stop offset="1" stop-color="#ff5a3c"/></linearGradient></defs>
<path d="M692.7 745.4 L700.4 736.6 Q700.9 736 701.7 736 H715.6 Q717.1 736 717.1 737.5 V751.4 Q717.1 752 716.6 752.5 L708.8 759.6 Q708.4 760 707.8 760 H694.2 Q692.7 760 692.7 758.5 Z" fill="url(#ij)"/>
<rect x="697.4" y="740.3" width="14.8" height="14.9" fill="#000"/>
<path d="M699.8 743 H703 M701.4 743 V748 M699.8 748 H703 M704.6 743 H707.4 M706.6 743 V746.6 Q706.6 748.2 704.4 747.9" stroke="#fff" stroke-width="1" fill="none"/>
<rect x="699.8" y="752.1" width="5.4" height="1" fill="#fff"/>
</svg>
<svg style="left:0;top:0" width="10" height="10">
<defs>
<linearGradient id="w1" x1="0" y1="0" x2="0" y2="1"><stop offset="0" stop-color="#8db2f4"/><stop offset="0.55" stop-color="#aecbfb"/><stop offset="1" stop-color="#6a9bf0"/></linearGradient>
<linearGradient id="w2" x1="1" y1="0" x2="0" y2="1"><stop offset="0" stop-color="#fbbd22"/><stop offset="1" stop-color="#ee8418"/></linearGradient>
</defs>
<path d="M921 735.9 Q927.4 739.4 925.6 745.4 Q922.6 750.6 916 749.6 Q913.4 748.6 912.2 745 Q916.6 746.6 919.4 743.6 Q921.8 740.6 921 735.9 Z" fill="url(#w2)"/>
<path d="M916.6 759 Q912 758.8 911.9 754.4 Q912.2 750.6 916.2 750 Q917.4 744.2 923.2 744.1 Q928 744.4 929.6 748.4 Q935.6 748 936.1 753.6 Q936 758.8 931 759 Z" fill="url(#w1)"/>
</svg>
<div class="a" style="left:0;top:698px;width:1364px;height:1px;background:#1e1f22"></div>
<div class="a" style="left:0;top:40px;width:1364px;height:1px;background:#1e1f22"></div>
<svg style="left:11px;top:53px" width="18" height="16" viewBox="0 0 18 16" fill="none" stroke="#ced0d6" stroke-width="1.3" stroke-linejoin="round">
<path d="M0.7 2.4 Q0.7 0.8 2.3 0.8 H6.2 L8.6 3.2 H15.7 Q17.3 3.2 17.3 4.8 V13 Q17.3 14.6 15.7 14.6 H2.3 Q0.7 14.6 0.7 13 Z"/>
</svg>
<div class="a" style="left:8px;top:86px;width:24px;height:1px;background:#43454a"></div>
<svg style="left:11.5px;top:103px" width="17" height="18" viewBox="0 0 17 18" fill="none" stroke="#ced0d6" stroke-width="1.3" stroke-linejoin="round">
<path d="M1 0 V18"/><path d="M1 4 H5 M1 14.3 H5"/>
<rect x="5.4" y="0.7" width="10.2" height="6.4" rx="1.6"/><rect x="5.4" y="11" width="10.2" height="6.4" rx="1.6"/>
</svg>
<svg style="left:0;top:0" width="10" height="10"><circle cx="13.4" cy="151.9" r="1.35" fill="#ced0d6"/><circle cx="20" cy="151.9" r="1.35" fill="#ced0d6"/><circle cx="26.6" cy="151.9" r="1.35" fill="#ced0d6"/></svg>
<svg style="left:0;top:0" width="10" height="10" fill="none" stroke="#ced0d6" stroke-width="1.3" stroke-linejoin="round" stroke-linecap="round">
<path d="M11.6 469.7 H14.4 Q15.6 470.6 17 470.2 Q19.4 469.5 22.2 469.6 Q26.6 469.9 28.4 474.2 L27 474.3 Q25 472.7 22.6 473 L21.4 474.2 H18 Q16.4 473.2 14.4 473.9 H11.6 Z"/>
<path d="M18.4 474.6 L17.4 479.2 V486.3 H21.9 V479.2 L20.9 474.6"/>
</svg>
<div class="a" style="left:5px;top:503px;width:30px;height:30px;border-radius:6px;background:#45474c"></div>
<svg style="left:0;top:0" width="10" height="10"><path d="M14 511 L27.1 518.1 L14 525.3 Z" fill="none" stroke="#ced0d6" stroke-width="1.4" stroke-linejoin="round"/></svg>
<svg style="left:0;top:0" width="10" height="10" fill="none" stroke="#ced0d6" stroke-width="1.3" stroke-linejoin="round">
<path d="M10.9 558 L15.2 550.3 H24.8 L29.1 558 L24.8 565.8 H15.2 Z"/><path d="M17.6 554.7 L24 558.05 L17.6 561.4 Z"/>
</svg>
<svg style="left:11px;top:590px" width="18" height="16" viewBox="0 0 18 16" fill="none" stroke="#ced0d6" stroke-width="1.3" stroke-linejoin="round" stroke-linecap="round">
<rect x="0.7" y="0.9" width="16.6" height="14" rx="1.8"/><path d="M4.4 4.6 L7.6 7.4 L4.4 10.2" stroke-width="1.2"/><path d="M9.2 11 H13.4" stroke-width="1.2"/>
</svg>
<svg style="left:0;top:0" width="10" height="10" fill="none" stroke="#ced0d6" stroke-width="1.3" stroke-linecap="round">
<circle cx="19.9" cy="637.9" r="8.3"/><path d="M19.9 633.6 V639.2" stroke-width="1.7"/><circle cx="19.9" cy="642.2" r="0.95" fill="#ced0d6" stroke="none"/>
</svg>
<svg style="left:0;top:0" width="10" height="10" fill="none" stroke="#ced0d6" stroke-width="1.3" stroke-linecap="round">
<circle cx="15.2" cy="672.4" r="2.6"/><circle cx="24" cy="674.4" r="2.6"/><path d="M15.2 675.2 V686.3"/><path d="M24 677.2 Q24 681.8 19.4 681.8 H15.4"/>
</svg>
<svg style="left:0;top:0" width="10" height="10" fill="none" stroke-linecap="round" stroke-linejoin="round">
<path d="M1256.8 94.2 L1260.2 97 L1266.8 90.4" stroke="#5fad65" stroke-width="2"/>
<path d="M1256 101.6 L1257.8 99.6 L1259.7 101.6 L1261.5 99.6 L1263.4 101.6 L1265.2 99.6 L1267 101.6" stroke="#5fad65" stroke-width="0.9"/>
<path d="M1288.2 96.8 L1292 93.3 L1295.8 96.8" stroke="#b4b8bf" stroke-width="1.1"/>
<path d="M1309.1 93.3 L1312.9 96.8 L1316.7 93.3" stroke="#b4b8bf" stroke-width="1.1"/>
</svg>
<svg style="left:0;top:0" width="10" height="10"><path d="M1272.3 93 L1275.2 91 V100" fill="none" stroke="#bcbec4" stroke-width="1.35" stroke-linejoin="miter"/></svg>
<svg style="left:0;top:0" width="10" height="10" fill="none" stroke="#ced0d6" stroke-width="1.3" stroke-linecap="round" stroke-linejoin="round">
<path d="M1338.3 66.6 H1353.7 Q1354 65 1352.6 63.6 Q1351.6 62.4 1351.6 60 V58.6 Q1351.6 52.7 1346 52.7 Q1340.4 52.7 1340.4 58.6 V60 Q1340.4 62.4 1339.4 63.6 Q1338 65 1338.3 66.6 Z"/>
<path d="M1344.2 69.3 Q1346 70.4 1347.8 69.3" stroke-width="1.5"/>
<circle cx="1352.5" cy="54.6" r="4.6" fill="#2b2d30" stroke="none"/><circle cx="1352.5" cy="54.6" r="3.6" fill="#db5c5c" stroke="none"/>
</svg>
<svg style="left:0;top:0" width="10" height="10" fill="none" stroke="#ced0d6" stroke-width="1.35" stroke-linecap="round" stroke-linejoin="round">
<path d="M1339.3 94.9 Q1345.4 91.7 1350.6 94.6 Q1353.2 96.4 1353.6 98.7"/>
<path d="M1349.4 99.2 Q1346.8 96.2 1343 97 Q1338.4 98.6 1338.4 102.6 Q1338.8 106.8 1344.2 108.3"/>
<path d="M1345.5 100.1 Q1342.4 100.4 1342.5 102.6 Q1342.7 104.2 1344.3 104.7"/>
<path d="M1347.4 101.1 H1354.2 Q1355.4 101.1 1355.4 102.3 V110.8 L1352.8 108.6 H1347.4 Q1346.2 108.6 1346.2 107.4 V102.3 Q1346.2 101.1 1347.4 101.1 Z" fill="#2b2d30"/>
</svg>
</body>
</html>
